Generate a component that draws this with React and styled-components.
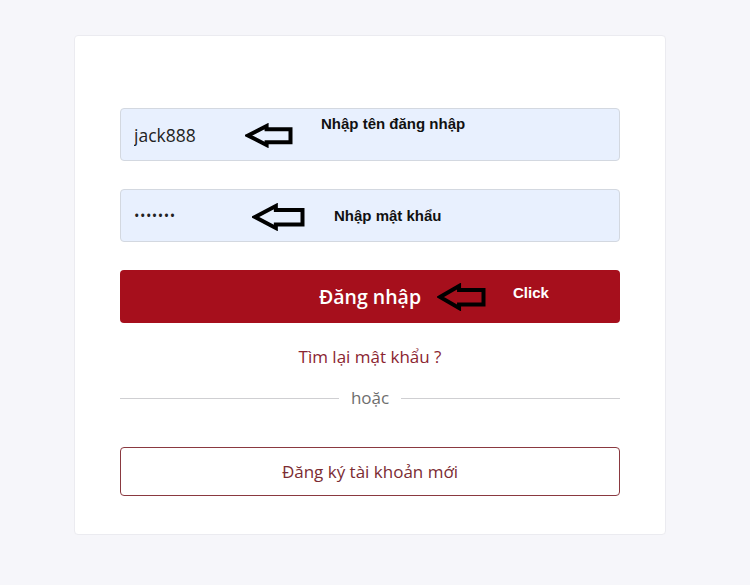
import styled, { createGlobalStyle } from "styled-components";

const GlobalStyle = createGlobalStyle`
    * { box-sizing: border-box; }
    body {
        margin: 0;
        background: #f6f6fa;
        font-family: "Open Sans", "Noto Sans", sans-serif;
    }
`

const Page = styled.main`
    width: 750px;
    height: 585px;
    padding: 35px 0 0 74px;
`

const Card = styled.section`
    width: 592px;
    height: 500px;
    background: #ffffff;
    border: 1px solid #ebebf0;
    border-radius: 4px;
    padding: 72px 45px 0 45px;
    display: flex;
    flex-direction: column;
`

const Fields = styled.div`
    display: flex;
    flex-direction: column;
    gap: 28px;
`

const Field = styled.div`
    position: relative;
`

const Input = styled.input`
    display: block;
    width: 500px;
    height: 53px;
    padding: 0 13px;
    background: #e8f0fe;
    border: 1px solid #d3d8e0;
    border-radius: 4px;
    font-family: "Open Sans", sans-serif;
    font-size: ${(p) => (p.type === "password" ? "14.5px" : "17.5px")};
    letter-spacing: ${(p) => (p.type === "password" ? "0.5px" : "0")};
    color: #222;
    outline: none;
`

const LoginButton = styled.button`
    display: block;
    width: 500px;
    height: 53px;
    border: none;
    border-radius: 4px;
    background: #a60f1c;
    color: #fff;
    font-family: "Open Sans", sans-serif;
    font-size: 19.5px;
    font-weight: 600;
    cursor: pointer;
`

const Forgot = styled.a`
    display: block;
    text-align: center;
    margin-top: 22px;
    font-size: 17px;
    color: #8b2531;
    text-decoration: none;
    line-height: 24px;
`

const Divider = styled.div`
    display: flex;
    align-items: center;
    gap: 12px;
    margin-top: 17px;
    font-size: 17px;
    color: #6e6e6e;
    line-height: 24px;

    &::before, &::after {
        content: "";
        flex: 1;
        height: 1px;
        background: #cfcfd2;
    }
`

const RegisterButton = styled.button`
    display: block;
    width: 500px;
    height: 49px;
    margin-top: 37px;
    background: #fff;
    border: 1px solid #8a3940;
    border-radius: 4px;
    color: #7b2c33;
    font-family: "Open Sans", sans-serif;
    font-size: 17px;
    cursor: pointer;
`

const Note = styled.span`
    position: absolute;
    left: ${(p) => p.$x}px;
    top: ${(p) => p.$y}px;
    font-family: "Liberation Sans", Arial, sans-serif;
    font-weight: 700;
    font-size: 15px;
    line-height: 17px;
    color: ${(p) => p.$color || "#111"};
    white-space: nowrap;
    pointer-events: none;
`

const ArrowBox = styled.svg`
    position: absolute;
    left: ${(p) => p.$x}px;
    top: ${(p) => p.$y}px;
    pointer-events: none;
`

function Arrow({ x, y, w, h }) {
    return (
        <ArrowBox $x={x} $y={y} width={w} height={h} viewBox={`0 0 ${w} ${h}`}>
            <polygon
                points={`3,${h / 2} ${w * 0.45},3 ${w * 0.45},${h * 0.25} ${w - 2.5},${h * 0.25} ${w - 2.5},${h * 0.77} ${w * 0.45},${h * 0.77} ${w * 0.45},${h - 3}`}
                fill="none"
                stroke="#000"
                strokeWidth="4"
                strokeLinejoin="miter"
            />
        </ArrowBox>
    )
}

export default function App() {
    return (
        <>
            <GlobalStyle />
            <Page>
                <Card>
                    <Fields>
                        <Field>
                            <Input type="text" value="jack888" readOnly />
                            <Arrow x={125} y={15} w={48} h={25} />
                            <Note $x={201} $y={7}>Nhập tên đăng nhập</Note>
                        </Field>
                        <Field>
                            <Input type="password" value="1234567" readOnly />
                            <Arrow x={132} y={14} w={53} h={28} />
                            <Note $x={214} $y={18}>Nhập mật khẩu</Note>
                        </Field>
                        <Field>
                            <LoginButton>Đăng nhập</LoginButton>
                            <Arrow x={317} y={13} w={49} h={28} />
                            <Note $x={393} $y={14} $color="#fff">Click</Note>
                        </Field>
                    </Fields>
                    <Forgot href="#">Tìm lại mật khẩu ?</Forgot>
                    <Divider>hoặc</Divider>
                    <RegisterButton>Đăng ký tài khoản mới</RegisterButton>
                </Card>
            </Page>
        </>
    )
}
